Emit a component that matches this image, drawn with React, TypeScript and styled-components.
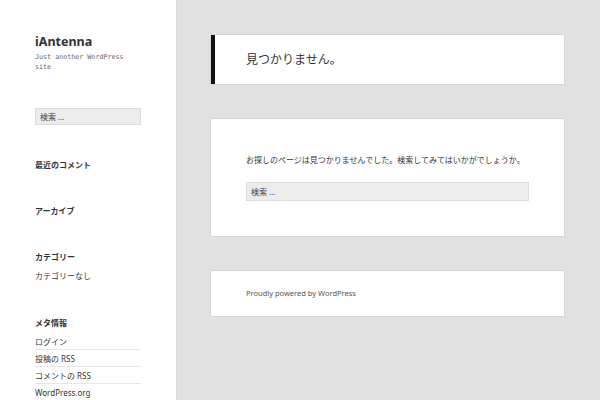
import React from "react";
import styled, { createGlobalStyle } from "styled-components";

const Global = createGlobalStyle`
  html, body { margin: 0; padding: 0; }
  body {
    background: #e1e1e1;
    font-family: "Noto Sans", "Noto Sans CJK JP", sans-serif;
    color: #333;
  }
  ul { list-style: none; margin: 0; padding: 0; }
`;

const Page = styled.div`
  display: flex;
  align-items: stretch;
  min-height: 100vh;
`;

const Sidebar = styled.aside`
  width: 176px;
  flex: none;
  background: #fff;
  box-shadow: 0 0 1px rgba(0, 0, 0, 0.2);
  padding: 34px 35px 0 35px;
  box-sizing: border-box;
`;

const SiteTitle = styled.h1`
  margin: 0;
  font-size: 12.5px;
  line-height: 16px;
  font-weight: 700;
  color: #333;
`;

const Tagline = styled.p`
  margin: 2px 0 0;
  font-family: "DejaVu Sans Mono", "Noto Sans CJK JP", monospace;
  font-size: 6.7px;
  line-height: 10px;
  color: #666;
`;

const SearchBox = styled.div<{ $height: number; $top: number }>`
  margin-top: ${(p) => p.$top}px;
  height: ${(p) => p.$height}px;
  box-sizing: border-box;
  background: #ececec;
  border: 1px solid #dcdcdc;
  display: flex;
  align-items: center;
  padding-left: 4px;
  font-size: 8px;
  color: #444;
  font-family: "Noto Sans", "Noto Sans CJK JP", sans-serif;
`;

const Widgets = styled.div`
  margin-top: 34px;
  display: flex;
  flex-direction: column;
  gap: 34px;
`;

const Widget = styled.section``;

const WidgetTitle = styled.h2`
  margin: 0;
  font-size: 8px;
  line-height: 12px;
  font-weight: 700;
  color: #333;
`;

const WidgetList = styled.ul`
  &:not(:empty) { margin-top: 4px; }
`;

const WidgetItem = styled.li`
  font-size: 8px;
  line-height: 12px;
  padding: 3px 0 1px;
  color: #333;
  & + & { border-top: 1px solid #e6e6e6; }
`;

const Main = styled.main`
  flex: 1;
  padding: 35px 36px 35px 35px;
  display: flex;
  flex-direction: column;
  gap: 35px;
`;

const Card = styled.div<{ $accent?: boolean; $padY: number }>`
  background: #fff;
  box-shadow: 0 0 1px rgba(0, 0, 0, 0.3);
  padding: ${(p) => p.$padY}px 35px;
  padding-left: ${(p) => (p.$accent ? 31 : 35)}px;
  border-left: ${(p) => (p.$accent ? "4px solid #111" : "none")};
`;

const PageTitle = styled.h1`
  margin: 0;
  font-size: 12px;
  line-height: 15px;
  font-weight: 400;
  color: #333;
`;

const Body = styled.p`
  margin: 0;
  font-size: 8px;
  line-height: 12px;
  color: #333;
  white-space: nowrap;
`;

const FooterText = styled.p`
  margin: 0;
  font-size: 7.5px;
  line-height: 13px;
  color: #555;
`;

export default function App() {
  return (
    <>
      <Global />
      <Page>
        <Sidebar>
          <SiteTitle>iAntenna</SiteTitle>
          <Tagline>Just another WordPress site</Tagline>
          <SearchBox $height={17} $top={36}>検索 …</SearchBox>
          <Widgets>
            <Widget>
              <WidgetTitle>最近のコメント</WidgetTitle>
              <WidgetList />
            </Widget>
            <Widget>
              <WidgetTitle>アーカイブ</WidgetTitle>
              <WidgetList />
            </Widget>
            <Widget>
              <WidgetTitle>カテゴリー</WidgetTitle>
              <WidgetList>
                <WidgetItem>カテゴリーなし</WidgetItem>
              </WidgetList>
            </Widget>
            <Widget>
              <WidgetTitle>メタ情報</WidgetTitle>
              <WidgetList>
                <WidgetItem>ログイン</WidgetItem>
                <WidgetItem>投稿の RSS</WidgetItem>
                <WidgetItem>コメントの RSS</WidgetItem>
                <WidgetItem>WordPress.org</WidgetItem>
              </WidgetList>
            </Widget>
          </Widgets>
        </Sidebar>
        <Main>
          <Card $accent $padY={17}>
            <PageTitle>見つかりません。</PageTitle>
          </Card>
          <Card $padY={35}>
            <Body>お探しのページは見つかりませんでした。検索してみてはいかがでしょうか。</Body>
            <SearchBox $height={19} $top={16}>検索 …</SearchBox>
          </Card>
          <Card $padY={16}>
            <FooterText>Proudly powered by WordPress</FooterText>
          </Card>
        </Main>
      </Page>
    </>
  );
}
